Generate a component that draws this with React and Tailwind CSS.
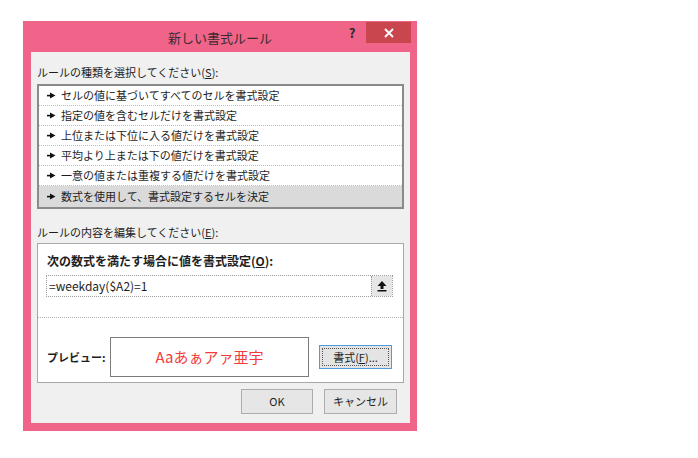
import React from 'react';

const rules = [
  'セルの値に基づいてすべてのセルを書式設定',
  '指定の値を含むセルだけを書式設定',
  '上位または下位に入る値だけを書式設定',
  '平均より上または下の値だけを書式設定',
  '一意の値または重複する値だけを書式設定',
  '数式を使用して、書式設定するセルを決定',
];

const Pointer = () => (
  <svg width="9" height="7" viewBox="0 0 9 7" className="shrink-0">
    <rect x="0" y="2.8" width="3.5" height="1.6" fill="#111" />
    <polygon points="3,0.5 8.5,3.5 3,6.5" fill="#111" />
  </svg>
);

const App = () => {
  const selected = 5;

  return (
    <div className="min-h-screen bg-white pt-[21px] pl-[23px] font-['Noto_Sans_CJK_JP',sans-serif] text-[#1e1e1e]">
      <div className="w-[394px] h-[410px] bg-[#f0648a] flex flex-col">
        {/* タイトルバー */}
        <div className="relative h-[31px] flex items-center justify-center">
          <span className="text-[13px] text-[#3a2a2e] pt-[2px]">新しい書式ルール</span>
          <div className="absolute right-[6px] top-[1px] flex items-center">
            <span className="w-[14px] mr-[7px] text-center text-[13px] font-bold text-[#2a2a2a] leading-[21px]">?</span>
            <button className="w-[45px] h-[21px] bg-[#c9464f] flex items-center justify-center">
              <svg width="10" height="10" viewBox="0 0 10 10">
                <path d="M1 1 L9 9 M9 1 L1 9" stroke="#fff" strokeWidth="1.8" />
              </svg>
            </button>
          </div>
        </div>

        {/* 本体 */}
        <div className="flex-1 ml-[8px] mr-[7px] mb-[8px] bg-[#f0f0f0] flex flex-col px-[6px]">
          <div className="pt-[12px] text-[11px] leading-[16px]">
            ルールの種類を選択してください(<span className="underline">S</span>):
          </div>

          <div className="mt-[4px] h-[125px] border-2 border-[#8a8a8a] bg-white flex flex-col">
            {rules.map((r, i) => (
              <div
                key={r}
                className={
                  i === selected
                    ? 'flex-1 flex items-center gap-[5px] pl-[8px] bg-[#dadada] text-[11px]'
                    : 'h-[20px] flex items-center gap-[5px] pl-[8px] border-b border-dotted border-[#bdbdbd] text-[11px]'
                }
              >
                <Pointer />
                <span>{r}</span>
              </div>
            ))}
          </div>

          <div className="mt-[15px] text-[11px] leading-[16px]">
            ルールの内容を編集してください(<span className="underline">E</span>):
          </div>

          <div className="mt-[3px] h-[140px] border border-[#a8a8a8] bg-white flex flex-col">
            <div className="pt-[9px] pl-[9px] text-[12px] leading-[16px] font-bold">
              次の数式を満たす場合に値を書式設定(<span className="underline">O</span>):
            </div>
            <div className="mt-[6px] ml-[8px] w-[347px] h-[22px] border border-dotted border-[#9a9a9a] flex items-stretch">
              <div className="flex-1 flex items-center pl-[2px] text-[12px]">=weekday($A2)=1</div>
              <div className="w-[21px] border-l border-dotted border-[#9a9a9a] bg-[#e6e6e6] flex items-center justify-center">
                <svg width="10" height="12" viewBox="0 0 10 12">
                  <polygon points="5,1 9.5,6 6.5,6 6.5,9 3.5,9 3.5,6 0.5,6" fill="#111" />
                  <rect x="0.5" y="10" width="9" height="1.5" fill="#111" />
                </svg>
              </div>
            </div>
            <div className="mt-[20px] border-t border-dotted border-[#b0b0b0]" />
            <div className="mt-[19px] flex items-center">
              <span className="w-[72px] pl-[9px] text-[11px] font-bold">プレビュー:</span>
              <div className="w-[199px] h-[40px] border border-[#7c7c7c] flex items-center justify-center text-[15px] text-[#f23c3c]">
                Aaあぁアァ亜宇
              </div>
              <button className="ml-[10px] w-[73px] h-[24px] border border-[#4f9be0] bg-[#e4e4e4] p-[2px]">
                <div className="w-full h-full border border-dotted border-[#555] flex items-center justify-center text-[11px]">
                  書式(<span className="underline">F</span>)...
                </div>
              </button>
            </div>
          </div>

          <div className="mt-[6px] flex justify-end gap-[11px] pr-[7px]">
            <button className="w-[72px] h-[25px] border border-[#adadad] bg-[#e6e6e6] text-[11px]">OK</button>
            <button className="w-[73px] h-[25px] border border-[#adadad] bg-[#e6e6e6] text-[11px]">キャンセル</button>
          </div>
        </div>
      </div>
    </div>
  );
};

export default App;
